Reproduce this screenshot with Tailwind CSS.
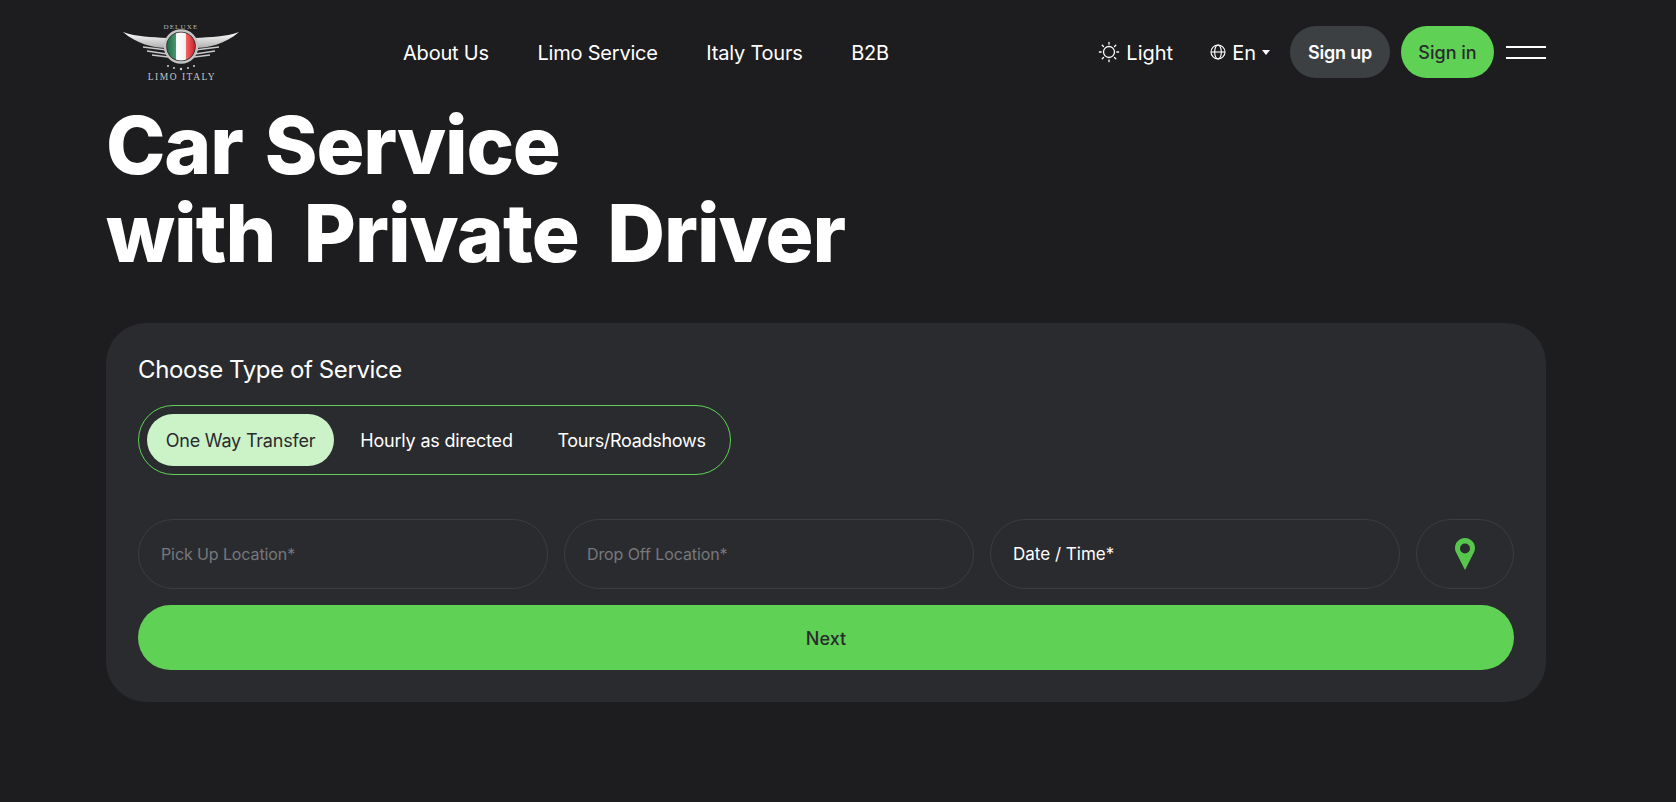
<!DOCTYPE html>
<html lang="en">
<head>
  <meta charset="UTF-8" />
  <title>Limo Italy</title>
  <script src="https://cdn.jsdelivr.net/npm/@tailwindcss/browser@4"></script>
</head>
<body class="bg-[#1d1d1f] text-white font-['Inter',sans-serif] h-[802px] overflow-hidden">
  <div class="w-[1440px] ml-[106px]">

    <!-- Header -->
    <header class="flex items-center h-[104px] relative">
      <a class="block w-[116px] ml-[17px] mb-[1px]">
        <svg viewBox="0 0 116 60" class="w-[116px] h-[60px]">
          <defs>
            <linearGradient id="wing" x1="0" y1="0" x2="0" y2="1">
              <stop offset="0" stop-color="#ffffff" />
              <stop offset="1" stop-color="#b0b0b0" />
            </linearGradient>
            <linearGradient id="flag" x1="0" y1="0" x2="1" y2="0">
              <stop offset="0" stop-color="#1f6b45" />
              <stop offset="0.33" stop-color="#4c9a70" />
              <stop offset="0.34" stop-color="#ffffff" />
              <stop offset="0.66" stop-color="#f2f2f2" />
              <stop offset="0.67" stop-color="#f26a6a" />
              <stop offset="1" stop-color="#c91f26" />
            </linearGradient>
          </defs>
          <text x="58" y="6.5" text-anchor="middle" font-family="Liberation Serif" font-size="7" letter-spacing="1.2" fill="#b5b5b5">DELUXE</text>
          <path d="M0 10 C14 15 28 15 44 16 L44 26 C30 26 14 22 0 10Z" fill="url(#wing)" />
          <path d="M116 10 C102 15 88 15 72 16 L72 26 C86 26 102 22 116 10Z" fill="url(#wing)" />
          <path d="M20 25 L44 28 M24 29 L44 32 M29 33 L45 35 M96 25 L72 28 M92 29 L72 32 M87 33 L71 35" stroke="#c9c9c9" stroke-width="1.4" fill="none" />
          <circle cx="58" cy="24.5" r="16" fill="#2a2a2a" stroke="#c4c4c4" stroke-width="2.4" />
          <circle cx="58" cy="24.5" r="14" fill="url(#flag)" />
          <g fill="#cfcfcf">
            <circle cx="45" cy="44" r="1" /><circle cx="51" cy="46" r="1" /><circle cx="58" cy="47" r="1.2" /><circle cx="65" cy="46" r="1" /><circle cx="71" cy="44" r="1" />
          </g>
          <text x="59" y="58" text-anchor="middle" font-family="Liberation Serif" font-size="9.5" letter-spacing="1.5" fill="#c4c4c4">LIMO ITALY</text>
        </svg>
      </a>
      <nav class="flex items-center gap-[48.5px] ml-[164px] text-[20px] tracking-[-0.2px] mt-[2px]">
        <a>About Us</a>
        <a>Limo Service</a>
        <a>Italy Tours</a>
        <a>B2B</a>
      </nav>
      <div class="ml-auto flex items-center">
        <svg viewBox="0 0 24 24" class="w-[22px] h-[22px] mr-[5px]" fill="none" stroke="white" stroke-width="1.4" stroke-linecap="round">
          <circle cx="12" cy="12" r="6" />
          <path d="M12 1.5v2M12 20.5v2M1.5 12h2M20.5 12h2M4.6 4.6l1.4 1.4M18 18l1.4 1.4M4.6 19.4L6 18M18 6l1.4-1.4" />
        </svg>
        <span class="text-[20px] ml-[1px] mt-[2px]">Light</span>
        <svg viewBox="0 0 24 24" class="w-[16px] h-[16px] ml-[37px] mr-[6px]" fill="none" stroke="white" stroke-width="1.7">
          <circle cx="12" cy="12" r="10.5" />
          <ellipse cx="12" cy="12" rx="5" ry="10.5" />
          <path d="M1.5 12h21" />
        </svg>
        <span class="text-[20px] mt-[2px]">En</span>
        <svg viewBox="0 0 8 5" class="w-[8px] h-[5px] ml-[6px] mr-[20px]"><path d="M0 0h8L4 5z" fill="white" /></svg>
        <a class="flex items-center justify-center w-[100px] h-[52px] rounded-full bg-[#3c4043] text-[18px] font-semibold tracking-[-0.2px]">Sign up</a>
        <a class="flex items-center justify-center w-[93px] h-[52px] ml-[11px] rounded-full bg-[#5fd255] text-[#2a2b2f] text-[18px] font-medium">Sign in</a>
        <div class="w-[40px] ml-[12px] flex flex-col gap-[9px]">
          <span class="block h-[2px] bg-white"></span>
          <span class="block h-[2px] bg-white"></span>
        </div>
      </div>
    </header>

    <!-- Hero -->
    <h1 class="text-[80px] leading-[88px] font-extrabold mt-[-3px]">
      <span class="block tracking-[-1.2px] [word-spacing:6px]">Car Service</span>
      <span class="block tracking-[-1px] [word-spacing:12px]">with Private Driver</span>
    </h1>

    <!-- Form card -->
    <section class="mt-[46px] bg-[#2a2b2f] rounded-[40px] p-[32px] pt-[29px]">
      <h2 class="text-[24px] leading-[36px] tracking-[-0.4px]">Choose Type of Service</h2>
      <div class="mt-[17px] w-[593px] h-[70px] rounded-full border border-[#5fd255] flex items-center px-[8px] text-[18px] tracking-[-0.2px]">
        <button class="shrink-0 h-[52px] w-[187px] rounded-full bg-[#ccf2c8] text-[#2a2b2f]">One Way Transfer</button>
        <button class="shrink-0 w-[205px] text-center">Hourly as directed</button>
        <button class="shrink-0 ml-[1px] w-[183px] text-center tracking-[-0.3px]">Tours/Roadshows</button>
      </div>
      <div class="mt-[44px] grid grid-cols-[410px_410px_410px_98px] gap-[16px]">
        <div class="h-[70px] rounded-full border border-[#3c3d42] flex items-center px-[22px] text-[16px] tracking-[-0.1px] text-[#77787c]">Pick Up Location*</div>
        <div class="h-[70px] rounded-full border border-[#3c3d42] flex items-center px-[22px] text-[16px] tracking-[-0.1px] text-[#77787c]">Drop Off Location*</div>
        <div class="h-[70px] rounded-full border border-[#3c3d42] flex items-center px-[22px] pt-[2px] text-[17px]">Date / Time*</div>
        <div class="h-[70px] rounded-full border border-[#3c3d42] flex items-center justify-center">
          <svg viewBox="0 0 20 32" class="w-[20px] h-[32px]">
            <path fill-rule="evenodd" d="M10 0C4.5 0 0 4.4 0 10c0 2 .6 3.6 1.5 5.2L10 32l8.5-16.8c.9-1.6 1.5-3.2 1.5-5.2C20 4.4 15.5 0 10 0zm0 5.5a5 5 0 1 1 0 10 5 5 0 0 1 0-10z" fill="#56c64d" />
          </svg>
        </div>
      </div>
      <button class="mt-[16px] w-full h-[65px] pt-[1px] rounded-full bg-[#5fd255] text-[#2a2b2f] text-[18px] font-medium">Next</button>
    </section>
  </div>
</body>
</html>
